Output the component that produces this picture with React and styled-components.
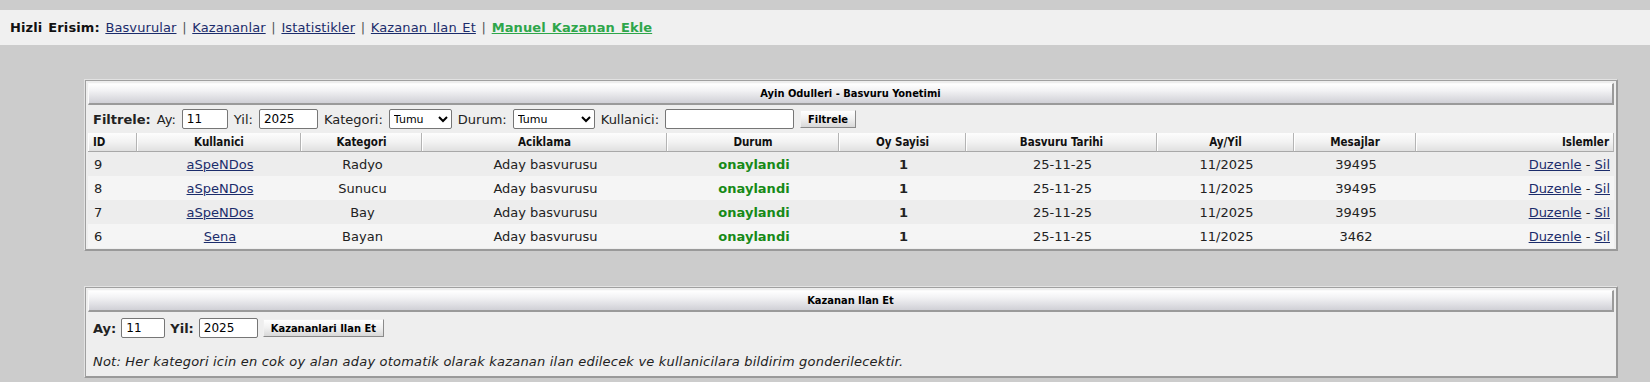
import React from "react";
import styled, { createGlobalStyle } from "styled-components";

const GlobalStyle = createGlobalStyle`
  body {
    margin: 0;
    background: #cccccc;
    font-family: "DejaVu Sans", Verdana, sans-serif;
    font-size: 13px;
    color: #222;
  }
`;

const cols = "49px 164px 121px 245px 172px 127px 191px 137px 122px 198px";
const tahoma = `"DejaVu Sans Condensed", "DejaVu Sans", sans-serif`;

const TopBar = styled.div`
  margin-top: 10px;
  height: 35px;
  line-height: 35px;
  background: #f0f0f0;
  padding-left: 10px;
  letter-spacing: 0.1px;
  word-spacing: 1.4px;
`;

const Strong = styled.b`
  font-weight: bold;
  color: #111;
`;

const Link = styled.a`
  color: ${(p) => (p.$green ? "#2ea64a" : "#1b2c6b")};
  font-weight: ${(p) => (p.$green ? "bold" : "normal")};
  text-decoration: underline;
  cursor: pointer;
`;

const Sep = styled.span`
  color: #555;
`;

const Content = styled.div`
  padding: 34px 0 0 84px;
  display: flex;
  flex-direction: column;
  gap: 35px;
`;

const Panel = styled.div`
  width: 1534px;
  box-sizing: border-box;
  background: #eeeeee;
  border: 1px solid;
  border-color: #e2e2e2 #999 #999 #e2e2e2;
  box-shadow: inset 1px 1px 0 #a0a0a0, inset -1px -1px 0 #9a9a9a;
  padding: 3px 3px 2px 3px;
`;

const PanelHead = styled.div`
  height: 22px;
  box-sizing: border-box;
  display: flex;
  align-items: center;
  justify-content: center;
  background: linear-gradient(#ffffff, #f2f2f4 35%, #d0d0d6);
  border: 1px solid;
  border-color: #fafafa #9a9a9a #9a9a9a #fafafa;
  border-width: 1px 2px 2px 1px;
  font: bold 11px ${tahoma};
  font-stretch: condensed;
  color: #000;
`;

const FilterRow = styled.div`
  height: 28px;
  display: flex;
  align-items: center;
  gap: 6px;
  padding-left: 5px;
`;

const Label = styled.span`
  font-weight: ${(p) => (p.$bold ? "bold" : "normal")};
  color: #222;
`;

const Input = styled.input`
  width: ${(p) => p.$w}px;
  height: 20px;
  box-sizing: border-box;
  border: 1px solid #767676;
  border-radius: 2px;
  padding: 0 4px;
  font: 12px "DejaVu Sans", Verdana, sans-serif;
  color: #000;
  background: #fff;
`;

const Select = styled.select`
  width: ${(p) => p.$w}px;
  height: 20px;
  box-sizing: border-box;
  border: 1px solid #767676;
  border-radius: 2px;
  font: 11px "DejaVu Sans", Verdana, sans-serif;
  color: #000;
  background: #fff;
`;

const Button = styled.button`
  height: 18px;
  padding: 0 7px;
  box-sizing: border-box;
  font: bold 11px ${tahoma};
  font-stretch: condensed;
  color: #000;
  background: linear-gradient(#ffffff, #f0f0f0 50%, #d8d8d8);
  border: 1px solid;
  border-color: #f0f0f0 #8a8a8a #8a8a8a #f0f0f0;
  cursor: pointer;
`;

const Grid = styled.div`
  display: grid;
  grid-template-columns: ${cols};
  height: ${(p) => (p.$head ? 19 : 24)}px;
  background: ${(p) => (p.$alt ? "#f5f5f5" : "#ededed")};
`;

const HeadCell = styled.div`
  display: flex;
  align-items: center;
  justify-content: ${(p) => p.$align || "center"};
  padding: 0 4px 0 5px;
  background: linear-gradient(#fdfdfd, #f2f2f2 50%, #e0e0e0);
  border-bottom: 1px solid #a8a8a8;
  border-right: 1px solid #b4b4b4;
  box-shadow: inset 1px 0 0 #ffffff;
  font: bold 11.5px ${tahoma};
  font-stretch: condensed;
  color: #111;
`;

const Cell = styled.div`
  display: flex;
  align-items: center;
  justify-content: ${(p) => p.$align || "center"};
  padding: 0 4px 0 6px;
  white-space: pre;
  color: #222;
`;

const Status = styled.b`
  color: #178a17;
  font-weight: bold;
`;

const FormBody = styled.div`
  display: flex;
  flex-direction: column;
  gap: 15px;
  padding: 5px 5px 5px 5px;
`;

const FormLine = styled.div`
  height: 22px;
  display: flex;
  align-items: center;
  gap: 5px;
`;

const Note = styled.i`
  font-style: italic;
  line-height: 16px;
  letter-spacing: 0.2px;
  color: #222;
`;

const headers = [
  ["ID", "flex-start"],
  ["Kullanici"],
  ["Kategori"],
  ["Aciklama"],
  ["Durum"],
  ["Oy Sayisi"],
  ["Basvuru Tarihi"],
  ["Ay/Yil"],
  ["Mesajlar"],
  ["Islemler", "flex-end"],
];

const rows = [
  { id: 9, user: "aSpeNDos", cat: "Radyo", msgs: "39495" },
  { id: 8, user: "aSpeNDos", cat: "Sunucu", msgs: "39495" },
  { id: 7, user: "aSpeNDos", cat: "Bay", msgs: "39495" },
  { id: 6, user: "Sena", cat: "Bayan", msgs: "3462" },
];

export default function App() {
  return (
    <>
      <GlobalStyle />
      <TopBar>
        <Strong>Hizli Erisim:</Strong> <Link>Basvurular</Link> <Sep>|</Sep>{" "}
        <Link>Kazananlar</Link> <Sep>|</Sep> <Link>Istatistikler</Link>{" "}
        <Sep>|</Sep> <Link>Kazanan Ilan Et</Link> <Sep>|</Sep>{" "}
        <Link $green>Manuel Kazanan Ekle</Link>
      </TopBar>
      <Content>
        <Panel>
          <PanelHead>Ayin Odulleri - Basvuru Yonetimi</PanelHead>
          <FilterRow>
            <Label $bold>Filtrele:</Label>
            <Label>Ay:</Label>
            <Input $w={46} defaultValue="11" />
            <Label>Yil:</Label>
            <Input $w={59} defaultValue="2025" />
            <Label>Kategori:</Label>
            <Select $w={63} defaultValue="">
              <option value="">Tumu</option>
              <option>Radyo</option>
              <option>Sunucu</option>
              <option>Bay</option>
              <option>Bayan</option>
            </Select>
            <Label>Durum:</Label>
            <Select $w={82} defaultValue="">
              <option value="">Tumu</option>
              <option>beklemede</option>
              <option>onaylandi</option>
            </Select>
            <Label>Kullanici:</Label>
            <Input $w={129} />
            <Button>Filtrele</Button>
          </FilterRow>
          <Grid $head>
            {headers.map(([t, a]) => (
              <HeadCell key={t} $align={a}>
                {t}
              </HeadCell>
            ))}
          </Grid>
          {rows.map((r, i) => (
            <Grid key={r.id} $alt={i % 2 === 1}>
              <Cell $align="flex-start">{r.id}</Cell>
              <Cell>
                <Link>{r.user}</Link>
              </Cell>
              <Cell>{r.cat}</Cell>
              <Cell>Aday basvurusu</Cell>
              <Cell>
                <Status>onaylandi</Status>
              </Cell>
              <Cell>
                <b>1</b>
              </Cell>
              <Cell>25-11-25</Cell>
              <Cell>11/2025</Cell>
              <Cell>{r.msgs}</Cell>
              <Cell $align="flex-end">
                <Link>Duzenle</Link> - <Link>Sil</Link>
              </Cell>
            </Grid>
          ))}
        </Panel>

        <Panel>
          <PanelHead>Kazanan Ilan Et</PanelHead>
          <FormBody>
            <FormLine>
              <Label $bold>Ay:</Label>
              <Input $w={44} defaultValue="11" />
              <Label $bold>Yil:</Label>
              <Input $w={59} defaultValue="2025" />
              <Button>Kazananlari Ilan Et</Button>
            </FormLine>
            <Note>
              Not: Her kategori icin en cok oy alan aday otomatik olarak kazanan
              ilan edilecek ve kullanicilara bildirim gonderilecektir.
            </Note>
          </FormBody>
        </Panel>
      </Content>
    </>
  );
}
